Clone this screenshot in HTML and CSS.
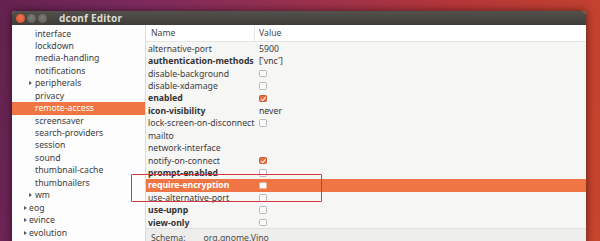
FILE: index.html
```html
<!DOCTYPE html>
<html lang="en">
  <head>
    <meta charset="UTF-8" />
    <meta name="viewport" content="width=device-width, initial-scale=1.0" />
    <title>dconf Editor</title>
    <link rel="stylesheet" href="styles.css">
  </head>
  <body>
    <div class="window">
      <div class="titlebar">
        <div class="buttons">
          <span class="btn close"></span>
          <span class="btn"></span>
          <span class="btn"></span>
        </div>
        <div class="title">dconf Editor</div>
      </div>
      <div class="content">
        <ul class="sidebar">
          <li class="item child">interface</li>
          <li class="item child">lockdown</li>
          <li class="item child">media-handling</li>
          <li class="item child">notifications</li>
          <li class="item child expander">peripherals</li>
          <li class="item child">privacy</li>
          <li class="item child selected">remote-access</li>
          <li class="item child">screensaver</li>
          <li class="item child">search-providers</li>
          <li class="item child">session</li>
          <li class="item child">sound</li>
          <li class="item child">thumbnail-cache</li>
          <li class="item child">thumbnailers</li>
          <li class="item child expander">wm</li>
          <li class="item top expander">eog</li>
          <li class="item top expander">evince</li>
          <li class="item top expander">evolution</li>
        </ul>
        <div class="pane">
          <div class="header">
            <div class="col-name">Name</div>
            <div class="col-value">Value</div>
          </div>
          <div class="rows">
            <div class="row"><span class="key">alternative-port</span><span class="val">5900</span></div>
            <div class="row bold"><span class="key">authentication-methods</span><span class="val">['vnc']</span></div>
            <div class="row"><span class="key">disable-background</span><span class="val"><span class="check"></span></span></div>
            <div class="row"><span class="key">disable-xdamage</span><span class="val"><span class="check"></span></span></div>
            <div class="row bold"><span class="key">enabled</span><span class="val"><span class="check on"></span></span></div>
            <div class="row bold"><span class="key">icon-visibility</span><span class="val">never</span></div>
            <div class="row"><span class="key">lock-screen-on-disconnect</span><span class="val"><span class="check"></span></span></div>
            <div class="row"><span class="key">mailto</span><span class="val"></span></div>
            <div class="row"><span class="key">network-interface</span><span class="val"></span></div>
            <div class="row"><span class="key">notify-on-connect</span><span class="val"><span class="check on"></span></span></div>
            <div class="row bold"><span class="key">prompt-enabled</span><span class="val"><span class="check"></span></span></div>
            <div class="row bold selected"><span class="key">require-encryption</span><span class="val"><span class="check"></span></span></div>
            <div class="row"><span class="key">use-alternative-port</span><span class="val"><span class="check"></span></span></div>
            <div class="row bold"><span class="key">use-upnp</span><span class="val"><span class="check"></span></span></div>
            <div class="row bold"><span class="key">view-only</span><span class="val"><span class="check"></span></span></div>
          </div>
          <div class="footer">
            <span class="schema-label">Schema:</span>
            <span class="schema-value">org.gnome.Vino</span>
          </div>
        </div>
      </div>
    </div>
    <div class="annotation"></div>
  </body>
</html>
```

FILE: styles.css
```css
* {
  margin: 0;
  padding: 0;
  box-sizing: border-box;
}

body {
  width: 600px;
  height: 241px;
  overflow: hidden;
  padding: 11px 14px 0 12px;
  font-family: "Noto Sans", "Open Sans", sans-serif;
  font-size: 8.7px;
  color: #3c3c3c;
  background: linear-gradient(100deg, #64224f 0%, #7b2a5e 20%, #97304f 45%, #b5363a 70%, #c6452c 100%);
  position: relative;
}

.window {
  height: 240px;
  background-color: #f6f6f5;
  box-shadow: 0 0 8px rgba(0, 0, 0, 0.55);
  border-radius: 4px 4px 0 0;
  overflow: hidden;
}

/* title bar */

.titlebar {
  height: 14px;
  display: flex;
  align-items: center;
  background: linear-gradient(#52514c, #3e3d39);
  padding-left: 4px;
}

.buttons {
  display: flex;
  gap: 2px;
}

.btn {
  width: 9px;
  height: 9px;
  border-radius: 50%;
  background: radial-gradient(circle at 50% 40%, #7d7b74, #5b5a55);
}

.btn.close {
  background: radial-gradient(circle at 50% 40%, #f2774f, #d9482a);
}

.title {
  margin-left: 12px;
  font-size: 10px;
  font-weight: bold;
  color: #dfdbd2;
  letter-spacing: 0.2px;
}

/* body */

.content {
  display: flex;
  height: 226px;
}

.sidebar {
  list-style: none;
  width: 134px;
  flex-shrink: 0;
  background-color: #fdfdfd;
  border-right: 1px solid #dcdcda;
  padding-top: 2.5px;
}

.item {
  height: 12.45px;
  line-height: 12.45px;
  white-space: nowrap;
  position: relative;
}

.item.child {
  padding-left: 23px;
}

.item.top {
  padding-left: 17px;
}

.item.expander::before {
  content: "";
  position: absolute;
  top: 4px;
  border-left: 3px solid #5a5a5a;
  border-top: 2.5px solid transparent;
  border-bottom: 2.5px solid transparent;
}

.item.child.expander::before {
  left: 17px;
}

.item.top.expander::before {
  left: 12px;
}

.item.selected {
  background-color: #ef7644;
  color: #fff;
}

.pane {
  flex: 1;
  display: flex;
  flex-direction: column;
}

.header {
  height: 17px;
  display: flex;
  align-items: center;
  background-color: #fff;
  border-bottom: 1px solid #e4e4e2;
  color: #4a4a4a;
}

.col-name {
  width: 109px;
  padding-left: 5px;
  border-right: 1px solid #e4e4e2;
  height: 100%;
  display: flex;
  align-items: center;
}

.col-value {
  padding-left: 4px;
}

.rows {
  padding-top: 0.5px;
}

.row {
  height: 12.43px;
  display: flex;
  align-items: center;
  white-space: nowrap;
}

.row.bold {
  font-weight: bold;
  color: #333;
}

.row.selected {
  background-color: #ef7644;
  color: #fff;
}

.key {
  width: 113px;
  padding-left: 2px;
  overflow: hidden;
}

.val {
  display: flex;
  align-items: center;
  font-weight: normal;
}

.check {
  width: 7.5px;
  height: 7.5px;
  border: 1px solid #b8b8b6;
  border-radius: 1.5px;
  background-color: #fbfbfb;
  position: relative;
}

.check.on {
  background-color: #e8703f;
  border-color: #c95c30;
}

.check.on::after {
  content: "";
  position: absolute;
  left: 1.5px;
  top: 0px;
  width: 2px;
  height: 3.5px;
  border-right: 1.2px solid #fff;
  border-bottom: 1.2px solid #fff;
  transform: rotate(40deg);
}

.row.selected .check {
  background-color: #fff;
  border-color: #f3b79c;
}

.footer {
  margin-top: -1px;
  flex: 1;
  background-color: #ededec;
  border-top: 1px solid #e0e0de;
  display: flex;
  padding: 3px 0 0 5px;
  gap: 18px;
  color: #4a4a4a;
}

.annotation {
  position: absolute;
  left: 131px;
  top: 174px;
  width: 191px;
  height: 28px;
  border: 1.5px solid #d4373d;
  border-radius: 1px;
}
```
